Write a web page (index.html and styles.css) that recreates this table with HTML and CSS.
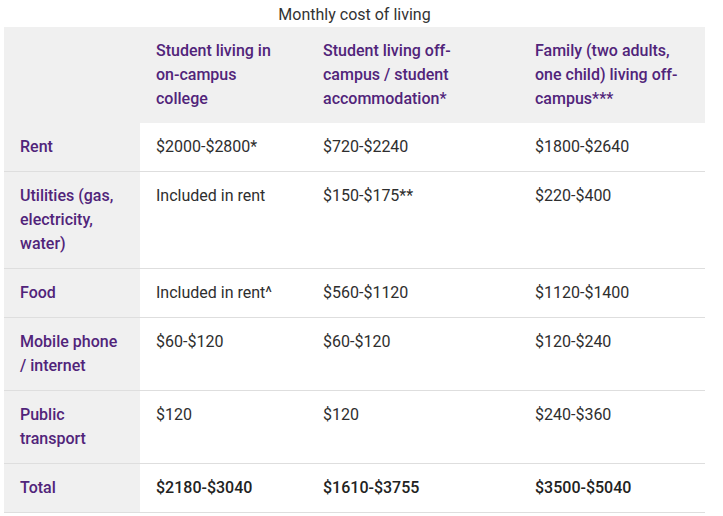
FILE: index.html
```html
<!DOCTYPE html>
<html>
<head>
<meta charset="utf-8">
<link rel="stylesheet" href="styles.css">
</head>
<body>
<table class="cost">
  <caption class="cap">Monthly cost of living</caption>
  <colgroup>
    <col class="c1"><col class="c2"><col class="c3"><col class="c4">
  </colgroup>
  <thead>
    <tr>
      <th class="corner"></th>
      <th class="colh">Student living in on-campus college</th>
      <th class="colh">Student living off-campus / student accommodation*</th>
      <th class="colh">Family (two adults, one child) living off-campus***</th>
    </tr>
  </thead>
  <tbody>
    <tr><th class="rowh">Rent</th><td>$2000-$2800*</td><td>$720-$2240</td><td>$1800-$2640</td></tr>
    <tr><th class="rowh">Utilities (gas, electricity, water)</th><td>Included in rent</td><td>$150-$175**</td><td>$220-$400</td></tr>
    <tr><th class="rowh">Food</th><td>Included in rent^</td><td>$560-$1120</td><td>$1120-$1400</td></tr>
    <tr><th class="rowh">Mobile phone / internet</th><td>$60-$120</td><td>$60-$120</td><td>$120-$240</td></tr>
    <tr><th class="rowh">Public transport</th><td>$120</td><td>$120</td><td>$240-$360</td></tr>
    <tr class="total"><th class="rowh">Total</th><td>$2180-$3040</td><td>$1610-$3755</td><td>$3500-$5040</td></tr>
  </tbody>
</table>
</body>
</html>
```
FILE: styles.css
```css
html, body {
  margin: 0;
  padding: 0;
  background: #ffffff;
}
body {
  padding: 3px 4px 0 4px;
  font-family: Roboto, "Liberation Sans", sans-serif;
  font-size: 16px;
  line-height: 24px;
  color: #2e2e2e;
}
.cost {
  width: 701px;
  border-collapse: collapse;
  table-layout: fixed;
}
.cap {
  caption-side: top;
  text-align: center;
  color: #333333;
  font-weight: 400;
  line-height: 24px;
  padding: 0;
}
.c1 { width: 136px; }
.c2 { width: 167px; }
.c3 { width: 212px; }
.c4 { width: 186px; }
th, td {
  padding: 12px 16px;
  text-align: left;
  vertical-align: top;
}
thead th {
  background: #f0f0f0;
  color: #51247a;
  font-weight: 500;
}
tbody th, tbody td {
  border-bottom: 1px solid #dedede;
}
.rowh {
  background: #f0f0f0;
  color: #51247a;
  font-weight: 500;
}
tbody td {
  font-weight: 400;
  color: #2e2e2e;
}
.total td {
  font-weight: 500;
  color: #222222;
}
```
